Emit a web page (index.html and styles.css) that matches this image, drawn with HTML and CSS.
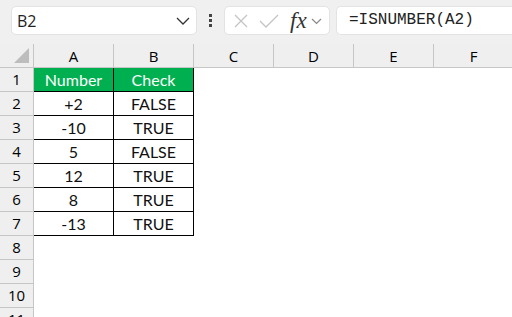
FILE: index.html
```html
<!DOCTYPE html>
<html>
<head>
  <meta charset="UTF-8">
  <title>ISNUMBER</title>
  <link rel="stylesheet" href="styles.css">
</head>
<body>
  <div class="toolbar">
    <div class="name-box">
      <span class="name-text">B2</span>
      <svg class="chev" width="14" height="8" viewBox="0 0 14 8"><path d="M1 1 L7 7 L13 1" fill="none" stroke="#333" stroke-width="1.3"/></svg>
    </div>
    <div class="dots"><span></span><span></span><span></span></div>
    <div class="fx-box">
      <svg width="16" height="16" viewBox="0 0 16 16"><path d="M2 2 L14 14 M14 2 L2 14" stroke="#c4c4c4" stroke-width="1.3"/></svg>
      <svg width="20" height="16" viewBox="0 0 20 16"><path d="M1 8 L7 14 L19 2" fill="none" stroke="#c4c4c4" stroke-width="1.3"/></svg>
      <span class="fx">fx</span>
      <svg class="chev-sm" width="11" height="7" viewBox="0 0 11 7"><path d="M1 1 L5.5 5.5 L10 1" fill="none" stroke="#888" stroke-width="1.2"/></svg>
    </div>
    <div class="formula">=ISNUMBER(A2)</div>
  </div>

  <div class="sheet">
    <div class="corner"><div class="tri"></div></div>
    <div class="col-head">A</div>
    <div class="col-head">B</div>
    <div class="col-head">C</div>
    <div class="col-head">D</div>
    <div class="col-head">E</div>
    <div class="col-head">F</div>

    <div class="row-head">1</div>
    <div class="cell head">Number</div>
    <div class="cell head">Check</div>
    <div class="blank"></div><div class="blank"></div><div class="blank"></div><div class="blank"></div>

    <div class="row-head">2</div>
    <div class="cell">+2</div>
    <div class="cell">FALSE</div>
    <div class="blank"></div><div class="blank"></div><div class="blank"></div><div class="blank"></div>

    <div class="row-head">3</div>
    <div class="cell">-10</div>
    <div class="cell">TRUE</div>
    <div class="blank"></div><div class="blank"></div><div class="blank"></div><div class="blank"></div>

    <div class="row-head">4</div>
    <div class="cell">5</div>
    <div class="cell">FALSE</div>
    <div class="blank"></div><div class="blank"></div><div class="blank"></div><div class="blank"></div>

    <div class="row-head">5</div>
    <div class="cell">12</div>
    <div class="cell">TRUE</div>
    <div class="blank"></div><div class="blank"></div><div class="blank"></div><div class="blank"></div>

    <div class="row-head">6</div>
    <div class="cell">8</div>
    <div class="cell">TRUE</div>
    <div class="blank"></div><div class="blank"></div><div class="blank"></div><div class="blank"></div>

    <div class="row-head">7</div>
    <div class="cell">-13</div>
    <div class="cell">TRUE</div>
    <div class="blank"></div><div class="blank"></div><div class="blank"></div><div class="blank"></div>

    <div class="row-head">8</div>
    <div class="blank"></div><div class="blank"></div><div class="blank"></div><div class="blank"></div><div class="blank"></div><div class="blank"></div>
    <div class="row-head">9</div>
    <div class="blank"></div><div class="blank"></div><div class="blank"></div><div class="blank"></div><div class="blank"></div><div class="blank"></div>
    <div class="row-head">10</div>
    <div class="blank"></div><div class="blank"></div><div class="blank"></div><div class="blank"></div><div class="blank"></div><div class="blank"></div>
    <div class="row-head">11</div>
    <div class="blank"></div><div class="blank"></div><div class="blank"></div><div class="blank"></div><div class="blank"></div><div class="blank"></div>
  </div>
</body>
</html>
```

FILE: styles.css
```css
* {
  margin: 0;
  padding: 0;
  box-sizing: border-box;
}

body {
  width: 512px;
  height: 317px;
  overflow: hidden;
  background: #fff;
  font-family: 'Open Sans', 'Noto Sans', sans-serif;
  color: #000;
}

.toolbar {
  height: 44px;
  background: #f0f0f0;
  display: flex;
  align-items: flex-start;
  padding-top: 6px;
  padding-left: 11px;
}

.name-box {
  width: 186px;
  height: 29px;
  background: #fff;
  border: 1px solid #e3e3e3;
  border-radius: 5px;
  display: flex;
  align-items: center;
  justify-content: space-between;
  padding: 0 6px 0 5px;
}

.name-text {
  font-size: 16px;
  color: #222;
}

.dots {
  width: 27px;
  height: 29px;
  display: flex;
  flex-direction: column;
  align-items: center;
  justify-content: center;
  gap: 2px;
}

.dots span {
  width: 3px;
  height: 3px;
  background: #444;
}

.fx-box {
  width: 106px;
  height: 29px;
  background: #fff;
  border: 1px solid #e3e3e3;
  border-radius: 5px;
  display: flex;
  align-items: center;
  padding-left: 8px;
  gap: 10px;
}

.fx {
  font-family: 'Liberation Serif', serif;
  font-style: italic;
  font-size: 23px;
  line-height: 27px;
  color: #333;
  margin-left: 1px;
  margin-right: -6px;
}

.chev-sm {
  margin-top: 2px;
}

.formula {
  margin-left: 6px;
  flex: 1;
  height: 29px;
  background: #fff;
  border: 1px solid #e3e3e3;
  border-right: none;
  border-radius: 5px 0 0 5px;
  font-family: 'Liberation Mono', monospace;
  font-size: 16px;
  line-height: 27px;
  padding-left: 12px;
  color: #222;
}

.sheet {
  display: grid;
  grid-template-columns: 34px repeat(6, 80px);
  grid-auto-rows: 24px;
}

.corner {
  background: #efefef;
  border-right: 1px solid #c6c6c6;
  border-bottom: 1px solid #c6c6c6;
  position: relative;
}

.tri {
  position: absolute;
  right: 4px;
  bottom: 4px;
  width: 0;
  height: 0;
  border-left: 15px solid transparent;
  border-bottom: 15px solid #bdbdbd;
}

.col-head {
  background: #efefef;
  border-right: 1px solid #c6c6c6;
  border-bottom: 1px solid #c6c6c6;
  font-size: 15px;
  text-align: center;
  line-height: 24px;
}

.row-head {
  background: #efefef;
  border-right: 1px solid #c6c6c6;
  border-bottom: 1px solid #c6c6c6;
  font-size: 15px;
  text-align: center;
  line-height: 23px;
}

.cell {
  border-right: 1px solid #000;
  border-bottom: 1px solid #000;
  font-family: 'Lato', sans-serif;
  font-size: 16px;
  text-align: center;
  line-height: 23px;
  color: #111;
}

.cell.head {
  background: #00b050;
  color: #fff;
}
```
